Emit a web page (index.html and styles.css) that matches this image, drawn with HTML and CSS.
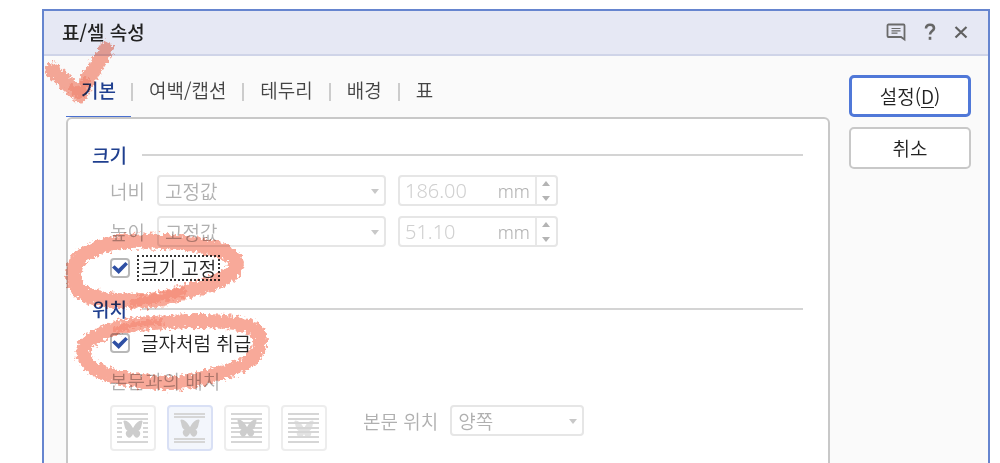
FILE: index.html
```html
<!DOCTYPE html>
<html lang="ko">
<head>
    <meta charset="UTF-8">
    <title>표/셀 속성</title>
    <link rel="stylesheet" href="styles.css">
</head>
<body>
    <!-- Shared shapes -->
    <svg class="defs" width="0" height="0" aria-hidden="true">
        <symbol id="butterfly" viewBox="0 0 20 18">
            <path d="M9.300 7C7.500 3.500 4.500.5 1.500.4.5.4.300 1.300.6 2.200c.9 2.300.8 5.500 2.400 7.300.5.6 1 .8 1.600.9-1.700 1-2.300 2.600-1.600 4.400.6 1.700 1.800 2.900 3.100 2.900 1.800 0 3-1.700 3.900-3.700.9 2 2.100 3.700 3.900 3.700 1.300 0 2.500-1.200 3.100-2.900.7-1.800.1-3.400-1.600-4.400.6-.1 1.100-.3 1.600-.9 1.600-1.800 1.500-5 2.400-7.300.3-.9.1-1.800-.9-1.800-3 .1-6 3.100-7.800 6.600L10 8z"/>
        </symbol>
    </svg>

    <div class="dialog">
        <header class="title-bar">
            <h1>표/셀 속성</h1>
            <div class="title-tools">
                <button type="button" aria-label="의견">
                    <svg width="20" height="20" viewBox="0 0 20 20" fill="none" stroke="#6a6a6a" stroke-width="1.800">
                        <path d="M2.500 2.500h15a1 1 0 0 1 1 1v14l-3.500-2.500H2.500a1 1 0 0 1-1-1V3.500a1 1 0 0 1 1-1z"/>
                        <path d="M5.500 6.500h9M5.500 8.800h9M5.500 11.200h6" stroke-width="1.200"/>
                    </svg>
                </button>
                <button type="button" aria-label="도움말">
                    <svg width="12" height="18" viewBox="0 0 12 18" fill="none" stroke="#666" stroke-width="2.600">
                        <path d="M2 5.500C2 3 3.500 1.800 6 1.800s4 1.200 4 3.400c0 2.800-4 3-4 6.300"/>
                        <path d="M6 13.800v3"/>
                    </svg>
                </button>
                <button type="button" aria-label="닫기">
                    <svg width="14" height="14" viewBox="0 0 14 14" stroke="#606060" stroke-width="2.200">
                        <path d="M1.500 2l11 10.500M12.500 2l-11 10.500"/>
                    </svg>
                </button>
            </div>
        </header>

        <div class="content">
            <div class="main">
                <div class="tabs" role="tablist">
                    <button type="button" class="tab active" role="tab" aria-selected="true">기본</button>
                    <button type="button" class="tab" role="tab">여백/캡션</button>
                    <button type="button" class="tab" role="tab">테두리</button>
                    <button type="button" class="tab" role="tab">배경</button>
                    <button type="button" class="tab" role="tab">표</button>
                </div>

                <form class="panel">
                    <h2>크기</h2>
                    <div class="size-rows">
                        <div class="row">
                            <label for="widthType">너비</label>
                            <div class="select-box">
                                <select id="widthType" disabled><option>고정값</option></select>
                            </div>
                            <div class="number-box">
                                <input type="text" value="186.00" aria-label="너비 값" disabled>
                                <span class="unit">mm</span>
                                <div class="spin">
                                    <button type="button" class="up" aria-label="늘리기" disabled></button>
                                    <button type="button" class="down" aria-label="줄이기" disabled></button>
                                </div>
                            </div>
                        </div>
                        <div class="row">
                            <label for="heightType">높이</label>
                            <div class="select-box">
                                <select id="heightType" disabled><option>고정값</option></select>
                            </div>
                            <div class="number-box">
                                <input type="text" value="51.10" aria-label="높이 값" disabled>
                                <span class="unit">mm</span>
                                <div class="spin">
                                    <button type="button" class="up" aria-label="늘리기" disabled></button>
                                    <button type="button" class="down" aria-label="줄이기" disabled></button>
                                </div>
                            </div>
                        </div>
                    </div>
                    <div class="check-row">
                        <input type="checkbox" id="fixSize" checked>
                        <label for="fixSize" class="focused">크기 고정</label>
                    </div>

                    <h2 class="position-title">위치</h2>
                    <div class="check-row">
                        <input type="checkbox" id="asChar" checked>
                        <label for="asChar">글자처럼 취급</label>
                    </div>
                    <p class="wrap-title">본문과의 배치</p>
                    <div class="wrap-row">
                        <div class="wrap-options">
                            <button type="button" aria-label="어울림" disabled>
                                <svg width="32" height="32" viewBox="0 0 32 32">
                                    <path class="lines" d="M0 2h31M0 7h31M0 11h5M26 11h5M0 16h5M26 16h5M0 20h5M26 20h5M0 25h5M26 25h5M0 30h31"/>
                                    <use href="#butterfly" x="6" y="8" width="20" height="18"/>
                                </svg>
                            </button>
                            <button type="button" class="selected" aria-label="자리 차지" disabled>
                                <svg width="32" height="32" viewBox="0 0 32 32">
                                    <path class="lines" d="M0 2h31M0 5h31M0 27h31M0 30h31"/>
                                    <use href="#butterfly" x="6" y="7" width="20" height="18"/>
                                </svg>
                            </button>
                            <button type="button" aria-label="글 앞으로" disabled>
                                <svg width="32" height="32" viewBox="0 0 32 32">
                                    <path class="lines" d="M0 2h31M0 7h31M0 11h31M0 16h31M0 20h31M0 25h31M0 30h31"/>
                                    <use href="#butterfly" x="6" y="7" width="20" height="18"/>
                                </svg>
                            </button>
                            <button type="button" aria-label="글 뒤로" disabled>
                                <svg width="32" height="32" viewBox="0 0 32 32">
                                    <use class="faint" href="#butterfly" x="6" y="8" width="20" height="18"/>
                                    <path class="lines" d="M0 2h31M0 7h31M0 11h31M0 16h31M0 20h31M0 25h31M0 30h31"/>
                                </svg>
                            </button>
                        </div>
                        <div class="row text-side">
                            <label for="textSide">본문 위치</label>
                            <div class="select-box small">
                                <select id="textSide" disabled><option>양쪽</option></select>
                            </div>
                        </div>
                    </div>
                </form>
            </div>

            <div class="actions">
                <button type="submit" class="primary">설정(<u>D</u>)</button>
                <button type="button">취소</button>
            </div>
        </div>

        <!-- Crayon marks over the dialog -->
        <svg class="marks" width="240" height="390" viewBox="44 11 240 390" aria-hidden="true">
            <filter id="crayon" x="-10%" y="-10%" width="120%" height="120%" color-interpolation-filters="sRGB">
                <feTurbulence type="fractalNoise" baseFrequency="0.3" numOctaves="2" seed="4" result="noise"/>
                <feDisplacementMap in="SourceGraphic" in2="noise" scale="10" xChannelSelector="R" yChannelSelector="G"/>
            </filter>
            <g class="crayon" filter="url(#crayon)">
                <path d="M52 70C61 77 71 88 80 95C86 79 97 67 106 49" stroke-width="15"/>
                <path d="M74 268C77 253 105 241 143 241C175 241 205 244 227 253C241 261 238 270 227 276C217 282 205 287 193 289C175 295 160 302 135 301C110 301 88 298 80 291C74 284 72 276 74 268z" stroke-width="15"/>
                <path d="M94 338C105 329 130 324 153 323C180 321 215 319 240 324C259 327 262 337 259 347C253 365 235 369 210 376C190 382 175 385 150 382C125 380 105 375 94 368C81 361 79 346 94 338z" stroke-width="14"/>
            </g>
            <g class="crayon heavy" filter="url(#crayon)">
                <path d="M72 88C75 91 77 94 80 95C82 89 84 85 86 81" stroke-width="8"/>
                <path d="M134 302C150 301 165 296 182 292" stroke-width="9"/>
                <path d="M115 330C130 325 145 322 160 322" stroke-width="6"/>
            </g>
        </svg>
    </div>
</body>
</html>
```

FILE: styles.css
```css
* {
    box-sizing: border-box;
}
html {
    overflow: hidden;
}
body {
    display: flex;
    height: 100vh;
    margin: 0;
    padding: 9px 10px 0 42px;
    background-color: #fff;
    font-family: "Noto Sans CJK KR", sans-serif;
    font-size: 19px;
    font-weight: 350;
    line-height: 26px;
    color: #222;
}
button, input, select {
    margin: 0;
    padding: 0;
    border: none;
    background: none;
    font: inherit;
    color: inherit;
}
h1, h2, p {
    margin: 0;
    font-size: 19px;
}
.defs {
    position: absolute;
}

/* Dialog frame */
.dialog {
    position: relative;
    display: flex;
    flex-direction: column;
    flex: 1;
    height: 100vh;
    border: 2px solid #6685cf;
    background-color: #fafafa;
}
.title-bar {
    display: flex;
    align-items: center;
    justify-content: space-between;
    padding: 8px 20px 9px 18px;
    border-bottom: 2px solid #cfd4e8;
    background-color: #e6e8f4;
}
.title-bar h1 {
    font-weight: 500;
}
.title-tools {
    display: flex;
    align-items: center;
    gap: 18px;
}
.title-tools svg {
    display: block;
}
.content {
    display: flex;
    flex: 1;
    gap: 19px;
    padding: 0 17px 0 22px;
}
.main {
    display: flex;
    flex-direction: column;
    flex: 1;
}

/* Tabs */
.tabs {
    display: flex;
    padding-top: 21px;
}
.tab {
    position: relative;
    padding: 0 16px 13px 18px;
    border-bottom: 1px solid transparent;
    color: #444;
}
.tab.active {
    padding: 0 15px 13px;
    border-bottom-color: #4a70d0;
    font-weight: 500;
    color: #1f3f8f;
}
.tab + .tab::before {
    content: "";
    position: absolute;
    top: 6px;
    left: 0;
    width: 2px;
    height: 18px;
    background-color: #ccc;
}

/* Panel */
.panel {
    flex: 1;
    padding: 23px 25px 0 24px;
    border: 2px solid #c8c8c8;
    border-radius: 6px;
    background-color: #fff;
}
.panel h2 {
    display: flex;
    align-items: center;
    gap: 15px;
    font-weight: 500;
    color: #1f3f8f;
}
.panel h2::after {
    content: "";
    flex: 1;
    height: 2px;
    background-color: #d4d4d4;
}
.size-rows {
    display: grid;
    gap: 10px;
    margin: 7px 0 8px 18px;
}
.row {
    display: flex;
    align-items: center;
    gap: 12px;
    color: #b0b0b0;
}
.select-box {
    position: relative;
    width: 229px;
    height: 31px;
}
.select-box.small {
    width: 134px;
}
.select-box select {
    width: 100%;
    height: 100%;
    padding: 0 6px;
    border: 2px solid #e6e6e6;
    border-radius: 4px;
    appearance: none;
    opacity: 1;
}
.select-box::after {
    content: "";
    position: absolute;
    top: 14px;
    right: 7px;
    border: 4px solid transparent;
    border-top: 5px solid #c8c8c8;
    border-bottom: none;
}
.number-box {
    display: flex;
    width: 160px;
    height: 31px;
    border: 2px solid #e6e6e6;
    border-radius: 4px;
}
.number-box input {
    flex: 1;
    min-width: 0;
    padding-left: 5px;
    font-family: "Noto Sans", sans-serif;
    font-size: 20px;
    color: #d0d0d0;
}
.unit {
    padding-right: 5px;
    font-family: "Noto Sans", sans-serif;
    font-size: 18px;
    line-height: 29px;
}
.spin {
    display: flex;
    flex-direction: column;
    justify-content: space-between;
    width: 21px;
    padding: 4px 0 3px;
    border-left: 2px solid #e8e8e8;
}
.spin button {
    align-self: center;
    border: 4px solid transparent;
}
.spin .up {
    border-top: none;
    border-bottom: 5px solid #b4b4b4;
}
.spin .down {
    border-bottom: none;
    border-top: 5px solid #b4b4b4;
}

/* Check boxes */
.check-row {
    display: flex;
    align-items: center;
    gap: 7px;
    height: 26px;
    margin-left: 18px;
}
.check-row input {
    display: grid;
    place-items: center;
    width: 20px;
    height: 20px;
    border: 2px solid #b8b8b8;
    border-radius: 4px;
    background-color: #fff;
    appearance: none;
}
.check-row input:checked::after {
    content: "";
    width: 16px;
    height: 12px;
    background-color: #2f50a4;
    clip-path: polygon(0 45%, 16% 28%, 40% 56%, 84% 0, 100% 18%, 42% 100%);
}
.check-row label {
    padding: 0 2px;
    border: 2px solid transparent;
    line-height: 22px;
}
.check-row label.focused {
    border: 2px dotted #333;
}
.position-title {
    margin: 15px 0 8px;
}

/* Text wrapping */
.wrap-title {
    margin: 12px 0 11px 18px;
    color: #b0b0b0;
}
.wrap-row {
    display: flex;
    align-items: flex-start;
    gap: 36px;
    margin-left: 18px;
}
.wrap-options {
    display: flex;
    gap: 11px;
}
.wrap-options button {
    display: grid;
    place-items: center;
    width: 46px;
    height: 46px;
    border: 2px solid #ededed;
    border-radius: 4px;
    background-color: #fff;
}
.wrap-options button.selected {
    border-color: #d9e0f5;
    background-color: #f3f6fc;
}
.wrap-options svg {
    fill: #cdcdcd;
}
.wrap-options .lines {
    stroke: #d6d6d6;
    stroke-width: 2;
}
.wrap-options .faint {
    fill: #e2e2e2;
}

/* Buttons on the right */
.actions {
    display: flex;
    flex-direction: column;
    gap: 10px;
    width: 122px;
    padding-top: 19px;
}
.actions button {
    height: 42px;
    border: 2px solid #c8c8c8;
    border-radius: 5px;
    background-color: #fff;
}
.actions .primary {
    border: 3px solid #5078d8;
}
.actions u {
    text-decoration-thickness: 1px;
    text-underline-offset: 3px;
}

.marks {
    position: absolute;
    top: 0;
    left: 0;
    overflow: visible;
    pointer-events: none;
    mix-blend-mode: multiply;
}
.crayon {
    fill: none;
    stroke: #f8a999;
    stroke-linecap: round;
    stroke-linejoin: round;
}
.crayon.heavy {
    stroke: #f47f68;
    opacity: 0.5;
}
```
